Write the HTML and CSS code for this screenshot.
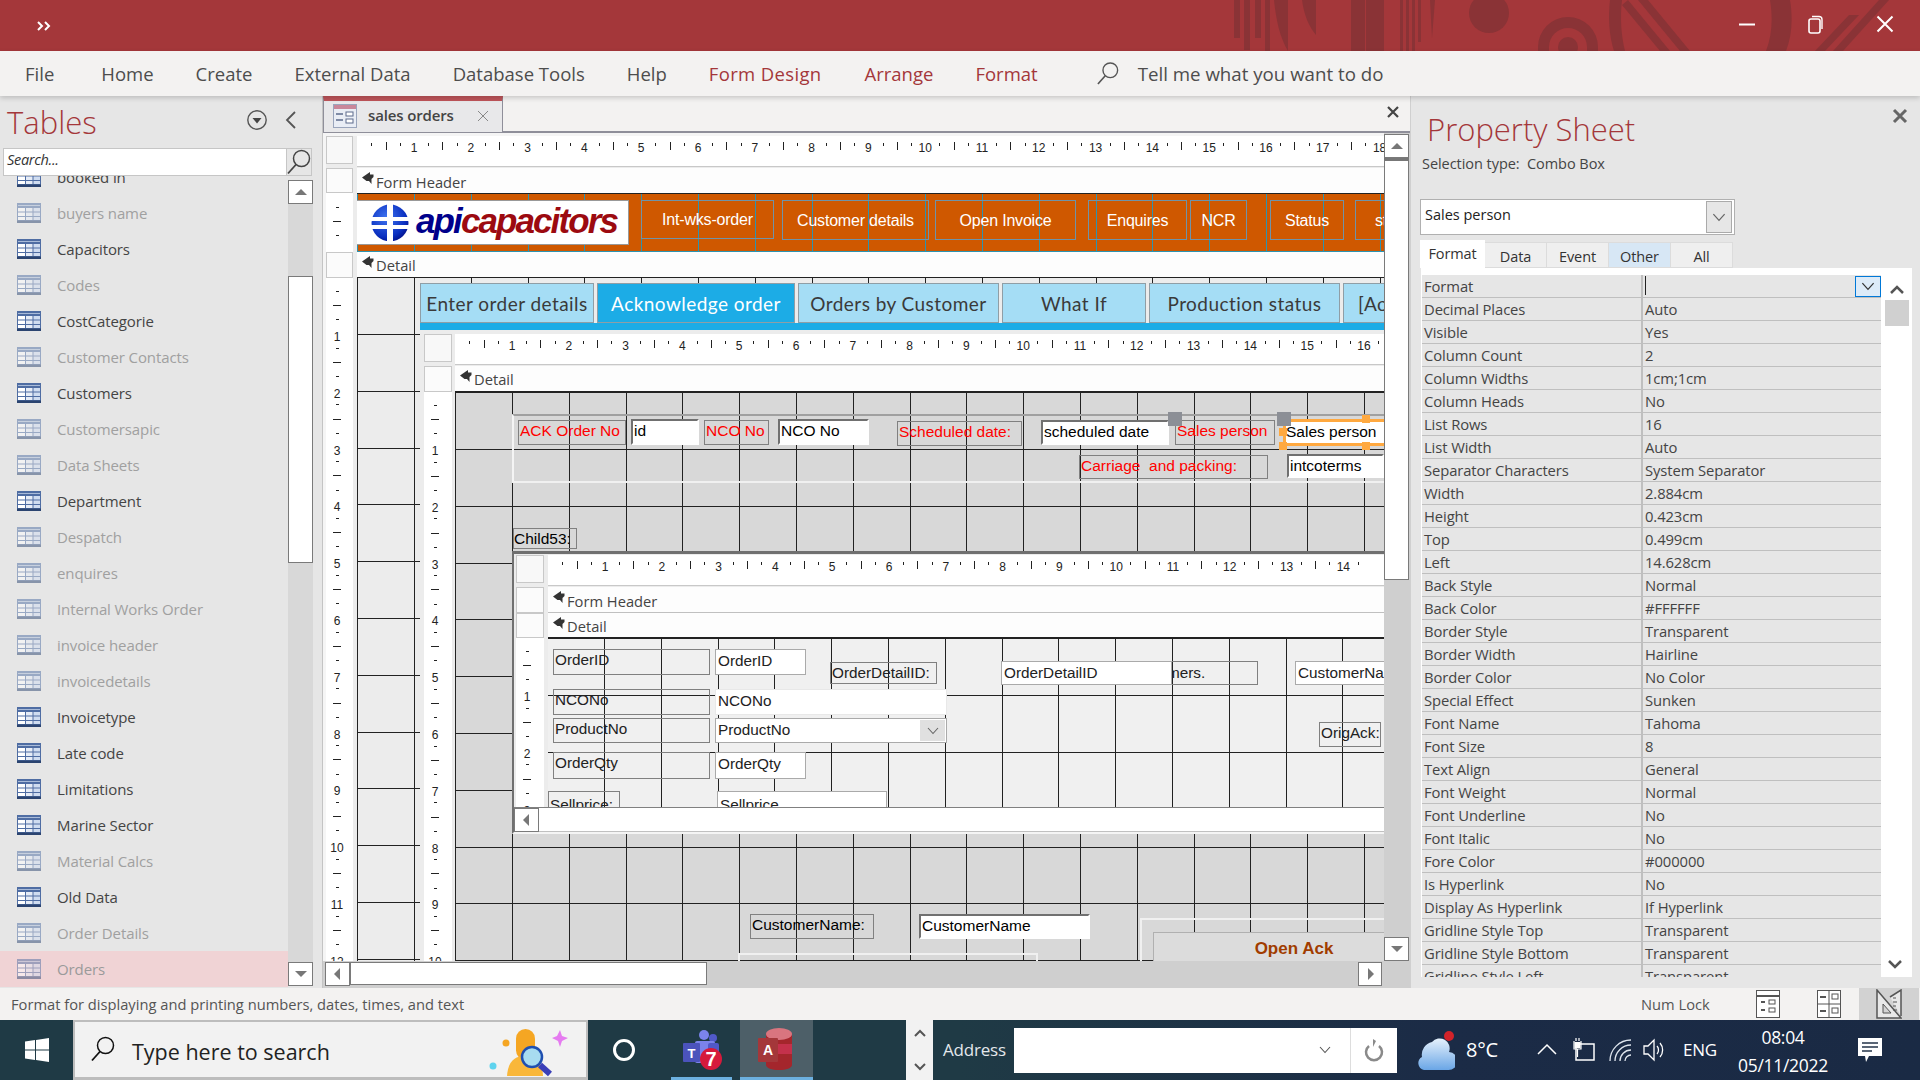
FILE: index.html
```html
<!DOCTYPE html>
<html lang="en">
<head>
<meta charset="utf-8">
<title>sales orders</title>
<link rel="stylesheet" href="styles.css">
</head>
<body>
<svg class="defs" width="0" height="0" aria-hidden="true">
  <symbol id="tbl" viewBox="0 0 24 20">
    <rect width="24" height="20" fill="#4f6da3"/>
    <rect y="17.5" width="24" height="2.5" fill="#2b4470"/>
    <rect x="1" y="2" width="22" height="1" fill="#a9bbd8"/>
    <rect x="1" y="5" width="7" height="3.5" fill="#fff"/><rect x="9" y="5" width="6.5" height="3.5" fill="#e6ecf6"/><rect x="16.500" y="5" width="6.500" height="3.500" fill="#cfdcf0"/>
    <rect x="1" y="9.500" width="7" height="3.500" fill="#fff"/><rect x="9" y="9.500" width="6.500" height="3.500" fill="#e6ecf6"/><rect x="16.500" y="9.500" width="6.500" height="3.500" fill="#cfdcf0"/>
    <rect x="1" y="14" width="7" height="3" fill="#fff"/><rect x="9" y="14" width="6.500" height="3" fill="#e6ecf6"/><rect x="16.500" y="14" width="6.500" height="3" fill="#cfdcf0"/>
  </symbol>
  <symbol id="mark" viewBox="0 0 12 12">
    <path d="M0 5.500L8 0V2.500H11.500V5L9.500 7V12L7 9H4.500z" fill="#333"/>
  </symbol>
  <symbol id="glass" viewBox="0 0 24 26">
    <circle cx="14.500" cy="9.500" r="8" fill="none" stroke="currentColor" stroke-width="1.500"/>
    <path d="M9 15.500L1 24.500" fill="none" stroke="currentColor" stroke-width="1.800"/>
  </symbol>
  <symbol id="chev" viewBox="0 0 12 8">
    <path d="M1 1l5 5.500L11 1" fill="none" stroke="currentColor" stroke-width="1.100"/>
  </symbol>
</svg>

<header class="titlebar">
  <svg class="title-art" width="760" height="51" viewBox="0 0 760 51" aria-hidden="true">
    <g fill="#8a3336">
      <rect x="74" width="6" height="38"/><rect x="84" width="6" height="50"/><rect x="95" width="6" height="38"/><rect x="105" width="5" height="51"/>
      <path d="M114 0H128V51C120 38 116 20 114 0z"/>
      <path d="M142 0h14v35c-7-8-12-20-14-35z"/>
      <rect x="191" width="14" height="51"/><rect x="206" width="18" height="51"/>
      <rect x="240" width="3" height="51"/><rect x="246" width="3" height="51"/><rect x="252" width="3" height="51"/><rect x="258" width="3" height="42"/>
      <path d="M270 0h5l-3 38z"/>
      <circle cx="329" cy="13" r="20"/>
      <path d="M378 51V47a30 30 0 0 1 60 0v4h-11v-4a19 19 0 0 0-38 0v4z"/>
      <circle cx="408" cy="47" r="10"/>
      <path d="M450 0h12c-2 18-1 35 3 51h-11c-5-16-6-34-4-51z"/>
      <path d="M462 5l6-5 42 51h-10z"/><path d="M478 0h10l42 51h-10z"/>
      <path d="M610 0h20c3 18 2 36-4 51h-20c6-15 7-33 4-51z"/>
      <path d="M655 51l34-36h10l-34 36z"/><path d="M673 51l46-51h10l-46 51z"/>
    </g>
  </svg>
  <svg class="qat" width="14" height="12" viewBox="0 0 14 12" aria-hidden="true"><path d="M1 2l4 4-4 4M8 2l4 4-4 4" fill="none" stroke="#fff" stroke-width="2"/></svg>
  <div class="winbtns">
    <svg width="18" height="18" viewBox="0 0 18 18" aria-hidden="true"><path d="M1 9.500H17" stroke="#fff" stroke-width="2"/></svg>
    <svg width="18" height="22" viewBox="0 0 18 22" aria-hidden="true"><rect x="2" y="6" width="11" height="14" rx="2" fill="none" stroke="#fff" stroke-width="1.600"/><path d="M5 3.500h7a3 3 0 0 1 3 3V16" fill="none" stroke="#fff" stroke-width="1.400"/></svg>
    <svg width="18" height="18" viewBox="0 0 18 18" aria-hidden="true"><path d="M1.500 1.500l15 15M16.500 1.500l-15 15" stroke="#fff" stroke-width="2"/></svg>
  </div>
</header>

<nav class="ribbon">
  <span class="r-file">File</span><span>Home</span><span>Create</span><span>External Data</span><span>Database Tools</span><span>Help</span>
  <span class="ctx r-form">Form Design</span><span class="ctx">Arrange</span><span class="ctx">Format</span>
  <span class="tell"><svg class="tell-ico" width="22" height="25"><use href="#glass"/></svg>Tell me what you want to do</span>
</nav>

<main class="main">
  <aside class="nav">
    <div class="nav-head">
      <h2>Tables</h2>
      <svg class="nav-btn" width="22" height="22" viewBox="0 0 22 22" aria-hidden="true"><circle cx="11" cy="11" r="9.200" fill="none" stroke="#555" stroke-width="1.400"/><path d="M6.500 9h9L11 14.500z" fill="#444"/></svg>
      <svg class="nav-btn2" width="12" height="20" viewBox="0 0 12 20" aria-hidden="true"><path d="M10 2L2 10l8 8" fill="none" stroke="#555" stroke-width="1.800"/></svg>
    </div>
    <div class="nav-search"><span class="nav-search-text">Search...</span><span class="nav-search-btn"><svg width="24" height="26"><use href="#glass"/></svg></span></div>
    <div class="nav-body">
      <ul class="nav-list">
        <li class="cut"><svg width="24" height="20"><use href="#tbl"/></svg>booked in</li>
        <li class="dim"><svg width="24" height="20"><use href="#tbl"/></svg>buyers name</li>
        <li><svg width="24" height="20"><use href="#tbl"/></svg>Capacitors</li>
        <li class="dim"><svg width="24" height="20"><use href="#tbl"/></svg>Codes</li>
        <li><svg width="24" height="20"><use href="#tbl"/></svg>CostCategorie</li>
        <li class="dim"><svg width="24" height="20"><use href="#tbl"/></svg>Customer Contacts</li>
        <li><svg width="24" height="20"><use href="#tbl"/></svg>Customers</li>
        <li class="dim"><svg width="24" height="20"><use href="#tbl"/></svg>Customersapic</li>
        <li class="dim"><svg width="24" height="20"><use href="#tbl"/></svg>Data Sheets</li>
        <li><svg width="24" height="20"><use href="#tbl"/></svg>Department</li>
        <li class="dim"><svg width="24" height="20"><use href="#tbl"/></svg>Despatch</li>
        <li class="dim"><svg width="24" height="20"><use href="#tbl"/></svg>enquires</li>
        <li class="dim"><svg width="24" height="20"><use href="#tbl"/></svg>Internal Works Order</li>
        <li class="dim"><svg width="24" height="20"><use href="#tbl"/></svg>invoice header</li>
        <li class="dim"><svg width="24" height="20"><use href="#tbl"/></svg>invoicedetails</li>
        <li><svg width="24" height="20"><use href="#tbl"/></svg>Invoicetype</li>
        <li><svg width="24" height="20"><use href="#tbl"/></svg>Late code</li>
        <li><svg width="24" height="20"><use href="#tbl"/></svg>Limitations</li>
        <li><svg width="24" height="20"><use href="#tbl"/></svg>Marine Sector</li>
        <li class="dim"><svg width="24" height="20"><use href="#tbl"/></svg>Material Calcs</li>
        <li><svg width="24" height="20"><use href="#tbl"/></svg>Old Data</li>
        <li class="dim"><svg width="24" height="20"><use href="#tbl"/></svg>Order Details</li>
        <li class="dim sel"><svg width="24" height="20"><use href="#tbl"/></svg>Orders</li>
      </ul>
      <div class="nav-scroll">
        <button class="sb-btn sb-up" aria-label="Scroll up"></button>
        <div class="nav-thumb"></div>
        <button class="sb-btn sb-down" aria-label="Scroll down"></button>
      </div>
    </div>
  </aside>

  <section class="doc">
    <div class="doc-tabs">
      <div class="doc-tab">
        <svg width="24" height="24" viewBox="0 0 24 24" aria-hidden="true"><rect width="24" height="24" fill="#e9edf5"/><rect width="24" height="5" fill="#c9879a"/><rect x=".5" y=".5" width="23" height="23" fill="none" stroke="#9aa5bc"/><path d="M3 10h7M3 16h7" stroke="#5c6b8c" stroke-width="1.500"/><rect x="13" y="8" width="7" height="4" fill="#fff" stroke="#5c6b8c"/><rect x="13" y="15" width="7" height="4" fill="#fff" stroke="#5c6b8c"/></svg>
        <b>sales orders</b>
        <svg class="doc-tab-x" width="12" height="12" viewBox="0 0 12 12" aria-hidden="true"><path d="M1 1l10 10M11 1L1 11" stroke="#888" stroke-width="1"/></svg>
      </div>
      <svg class="doc-x" width="14" height="14" viewBox="0 0 14 14" aria-hidden="true"><path d="M2 2l10 10M12 2L2 12" stroke="#444" stroke-width="2.200"/></svg>
    </div>

    <div class="doc-body">
      <div class="surface">
        <div class="fd fd-outer">
          <div class="corner"></div>
          <div class="hruler"><i class="cm first"></i><i class="cm">1</i><i class="cm">2</i><i class="cm">3</i><i class="cm">4</i><i class="cm">5</i><i class="cm">6</i><i class="cm">7</i><i class="cm">8</i><i class="cm">9</i><i class="cm">10</i><i class="cm">11</i><i class="cm">12</i><i class="cm">13</i><i class="cm">14</i><i class="cm">15</i><i class="cm">16</i><i class="cm">17</i><i class="cm">18</i></div>
          <div class="vruler">
            <div class="vband"></div>
            <div class="vpart vpart-hdr"><i class="cm first"></i><i class="cm"></i></div>
            <div class="vband vband-tall"></div>
            <div class="vpart"><i class="cm first"></i><i class="cm">1</i><i class="cm">2</i><i class="cm">3</i><i class="cm">4</i><i class="cm">5</i><i class="cm">6</i><i class="cm">7</i><i class="cm">8</i><i class="cm">9</i><i class="cm">10</i><i class="cm">11</i><i class="cm">12</i></div>
          </div>
          <div class="sections">
            <div class="band band-h"><svg class="mark" width="12" height="12"><use href="#mark"/></svg>Form Header</div>
            <div class="sec-orange">
              <div class="logo">
                <svg width="44" height="44" viewBox="0 0 44 44" aria-hidden="true">
                  <defs><radialGradient id="ball" cx=".4" cy=".35" r=".75"><stop offset="0" stop-color="#3f74f0"/><stop offset=".7" stop-color="#0a2fc0"/><stop offset="1" stop-color="#00087a"/></radialGradient></defs>
                  <circle cx="22" cy="22" r="18.500" fill="url(#ball)"/>
                  <path d="M19 3h6v13h16v4H25v4h16v4H25v13h-6V28H3v-4h16v-4H3v-4h16z" fill="#fff"/>
                </svg>
                <span class="logo-text"><b class="l1">api</b><b class="l2">capacitors</b></span>
              </div>
              <span class="obtn ob1">Int-wks-order</span>
              <span class="obtn ob2">Customer details</span>
              <span class="obtn ob3">Open Invoice</span>
              <span class="obtn ob4">Enquires</span>
              <span class="obtn ob5">NCR</span>
              <span class="obtn ob6">Status</span>
              <span class="obtn ob7">st</span>
            </div>
            <div class="band band-d"><svg class="mark" width="12" height="12"><use href="#mark"/></svg>Detail</div>
            <div class="sec-detail">
              <div class="tabctl">
                <div class="tabrow">
                  <span class="ftab ft1">Enter order details</span>
                  <span class="ftab ft2 on">Acknowledge order</span>
                  <span class="ftab ft3">Orders by Customer</span>
                  <span class="ftab ft4">What If</span>
                  <span class="ftab ft5">Production status</span>
                  <span class="ftab ft6">[Ac</span>
                </div>
                <div class="fd fd-inner">
                  <div class="corner"></div>
                  <div class="hruler"><i class="cm first"></i><i class="cm">1</i><i class="cm">2</i><i class="cm">3</i><i class="cm">4</i><i class="cm">5</i><i class="cm">6</i><i class="cm">7</i><i class="cm">8</i><i class="cm">9</i><i class="cm">10</i><i class="cm">11</i><i class="cm">12</i><i class="cm">13</i><i class="cm">14</i><i class="cm">15</i><i class="cm">16</i></div>
                  <div class="vruler">
                    <div class="vband vband-tall"></div>
                    <div class="vpart"><i class="cm first"></i><i class="cm">1</i><i class="cm">2</i><i class="cm">3</i><i class="cm">4</i><i class="cm">5</i><i class="cm">6</i><i class="cm">7</i><i class="cm">8</i><i class="cm">9</i><i class="cm">10</i></div>
                  </div>
                  <div class="sections">
                    <div class="band band-d"><svg class="mark" width="12" height="12"><use href="#mark"/></svg>Detail</div>
                    <div class="sec-inner">
                      <div class="gbox"></div>
                      <div class="ctl lbl red c-ack">ACK Order No</div>
                      <div class="ctl tbx c-id">id</div>
                      <div class="ctl lbl red c-ncol">NCO No</div>
                      <div class="ctl tbx c-ncob">NCO No</div>
                      <div class="ctl lbl red c-schl">Scheduled date:</div>
                      <div class="ctl tbx c-schb">scheduled date</div>
                      <div class="ctl lbl red c-sall">Sales person</div>
                      <div class="ctl combo-sel c-salb">Sales person</div>
                      <i class="h-gray hg1"></i><i class="h-gray hg2"></i>
                      <i class="h-or ho1"></i><i class="h-or ho2"></i><i class="h-or ho3"></i><i class="h-or ho4"></i>
                      <div class="ctl lbl red c-carl">Carriage&nbsp; and packing:</div>
                      <div class="ctl tbx c-inco">intcoterms</div>
                      <div class="ctl lbl c-child">Child53:</div>

                      <div class="subframe">
                        <div class="fd fd-sub">
                          <div class="corner"></div>
                          <div class="hruler"><i class="cm first"></i><i class="cm">1</i><i class="cm">2</i><i class="cm">3</i><i class="cm">4</i><i class="cm">5</i><i class="cm">6</i><i class="cm">7</i><i class="cm">8</i><i class="cm">9</i><i class="cm">10</i><i class="cm">11</i><i class="cm">12</i><i class="cm">13</i><i class="cm">14</i></div>
                          <div class="vruler">
                            <div class="vband vband-a"></div>
                            <div class="vband vband-b"></div>
                            <div class="vpart"><i class="cm first"></i><i class="cm">1</i><i class="cm">2</i><i class="cm">3</i></div>
                          </div>
                          <div class="sections">
                            <div class="band band-a"><svg class="mark" width="12" height="12"><use href="#mark"/></svg>Form Header</div>
                            <div class="band band-b"><svg class="mark" width="12" height="12"><use href="#mark"/></svg>Detail</div>
                            <div class="sec-sub">
                              <div class="ctl sl s-oidl">OrderID</div>
                              <div class="ctl sb s-oidb">OrderID</div>
                              <div class="ctl sl s-odl">OrderDetailID:</div>
                              <div class="ctl sl s-cl">Customers.</div>
                              <div class="ctl sb s-odb">OrderDetailID</div>
                              <div class="ctl sb s-cnb">CustomerName</div>
                              <div class="ctl sl s-ncl">NCONo</div>
                              <div class="ctl sb s-ncb">NCONo</div>
                              <div class="ctl sl s-pl">ProductNo</div>
                              <div class="ctl sb s-pb">ProductNo<span class="combo-btn"><svg width="12" height="8"><use href="#chev"/></svg></span></div>
                              <div class="ctl sl s-ql">OrderQty</div>
                              <div class="ctl sb s-qb">OrderQty</div>
                              <div class="ctl sl s-spl">Sellprice:</div>
                              <div class="ctl sb s-spb">Sellprice</div>
                              <div class="ctl sl s-oa">OrigAck:</div>
                            </div>
                          </div>
                        </div>
                        <div class="sub-h"><button class="sb-btn sb-left" aria-label="Scroll left"></button></div>
                      </div>

                      <div class="ctl lbl c-cnl">CustomerName:</div>
                      <div class="ctl tbx c-cnb">CustomerName</div>
                      <div class="gbox2"></div>
                      <div class="gbox3"></div>
                      <div class="c-open">Open Ack</div>
                    </div>
                  </div>
                </div>
              </div>
            </div>
          </div>
        </div>
      </div>
      <div class="v-scroll">
        <button class="sb-btn sb-up" aria-label="Scroll up"></button>
        <div class="v-thumb"></div>
        <button class="sb-btn sb-down" aria-label="Scroll down"></button>
      </div>
      <div class="h-scroll">
        <button class="sb-btn sb-left" aria-label="Scroll left"></button>
        <div class="h-thumb"></div>
        <button class="sb-btn sb-right" aria-label="Scroll right"></button>
      </div>
    </div>
  </section>

  <aside class="props">
    <svg class="props-x" width="16" height="16" viewBox="0 0 16 16" aria-hidden="true"><path d="M2 2l12 12M14 2L2 14" stroke="#666" stroke-width="3"/></svg>
    <h2>Property Sheet</h2>
    <p class="seltype">Selection type:&nbsp; Combo Box</p>
    <div class="pcombo"><span>Sales person</span><i class="pcombo-btn"><svg width="14" height="9"><use href="#chev"/></svg></i></div>
    <div class="ptabs"><span class="on">Format</span><span>Data</span><span>Event</span><span class="hov">Other</span><span>All</span></div>
    <div class="ppanel">
      <div class="ptable">
        <div class="prow first"><span>Format</span><span><i class="caret"></i><i class="pdrop"><svg width="14" height="9"><use href="#chev"/></svg></i></span></div>
        <div class="prow"><span>Decimal Places</span><span>Auto</span></div>
        <div class="prow"><span>Visible</span><span>Yes</span></div>
        <div class="prow"><span>Column Count</span><span>2</span></div>
        <div class="prow"><span>Column Widths</span><span>1cm;1cm</span></div>
        <div class="prow"><span>Column Heads</span><span>No</span></div>
        <div class="prow"><span>List Rows</span><span>16</span></div>
        <div class="prow"><span>List Width</span><span>Auto</span></div>
        <div class="prow"><span>Separator Characters</span><span>System Separator</span></div>
        <div class="prow"><span>Width</span><span>2.884cm</span></div>
        <div class="prow"><span>Height</span><span>0.423cm</span></div>
        <div class="prow"><span>Top</span><span>0.499cm</span></div>
        <div class="prow"><span>Left</span><span>14.628cm</span></div>
        <div class="prow"><span>Back Style</span><span>Normal</span></div>
        <div class="prow"><span>Back Color</span><span>#FFFFFF</span></div>
        <div class="prow"><span>Border Style</span><span>Transparent</span></div>
        <div class="prow"><span>Border Width</span><span>Hairline</span></div>
        <div class="prow"><span>Border Color</span><span>No Color</span></div>
        <div class="prow"><span>Special Effect</span><span>Sunken</span></div>
        <div class="prow"><span>Font Name</span><span>Tahoma</span></div>
        <div class="prow"><span>Font Size</span><span>8</span></div>
        <div class="prow"><span>Text Align</span><span>General</span></div>
        <div class="prow"><span>Font Weight</span><span>Normal</span></div>
        <div class="prow"><span>Font Underline</span><span>No</span></div>
        <div class="prow"><span>Font Italic</span><span>No</span></div>
        <div class="prow"><span>Fore Color</span><span>#000000</span></div>
        <div class="prow"><span>Is Hyperlink</span><span>No</span></div>
        <div class="prow"><span>Display As Hyperlink</span><span>If Hyperlink</span></div>
        <div class="prow"><span>Gridline Style Top</span><span>Transparent</span></div>
        <div class="prow"><span>Gridline Style Bottom</span><span>Transparent</span></div>
        <div class="prow"><span>Gridline Style Left</span><span>Transparent</span></div>
      </div>
      <div class="pscroll">
        <svg width="16" height="11" viewBox="0 0 16 11" aria-hidden="true"><path d="M2 9l6-6 6 6" fill="none" stroke="#555" stroke-width="2.500"/></svg>
        <div class="pthumb"></div>
        <svg class="pdown" width="16" height="11" viewBox="0 0 16 11" aria-hidden="true"><path d="M2 2l6 6 6-6" fill="none" stroke="#555" stroke-width="2.500"/></svg>
      </div>
    </div>
  </aside>
</main>

<footer class="status">
  <span class="status-text">Format for displaying and printing numbers, dates, times, and text</span>
  <span class="numlock">Num Lock</span>
  <span class="view-btn vb1"><svg width="24" height="28" viewBox="0 0 24 28" aria-hidden="true"><rect x=".5" y=".5" width="23" height="27" fill="#fff" stroke="#555"/><path d="M1 6h22" stroke="#555" stroke-width="2"/><path d="M5 12h4M5 20h4" stroke="#555" stroke-width="2"/><rect x="13" y="10" width="6" height="4" fill="none" stroke="#555"/><rect x="13" y="18" width="6" height="4" fill="none" stroke="#555"/></svg></span>
  <span class="view-btn vb2"><svg width="24" height="28" viewBox="0 0 24 28" aria-hidden="true"><rect x=".5" y=".5" width="23" height="27" fill="#fff" stroke="#555"/><path d="M12 0v28M0 14h24" stroke="#555"/><path d="M3 7h6" stroke="#555" stroke-width="2"/><rect x="15" y="4" width="6" height="5" fill="none" stroke="#555"/><path d="M3 21h6" stroke="#555" stroke-width="2"/><rect x="15" y="18" width="6" height="5" fill="none" stroke="#555"/></svg></span>
  <span class="view-btn active"><svg width="26" height="30" viewBox="0 0 26 30" aria-hidden="true"><path d="M1 1v28h24z" fill="#e8e8e8" stroke="#555" stroke-width="1.500"/><path d="M7 15v9h8z" fill="#d2d2d2" stroke="#555"/><path d="M14 8L25 1v26" fill="#e8e8e8" stroke="#555" stroke-width="1.500"/><path d="M17 9h3M17 13h4M17 17h3M17 21h4" stroke="#555"/></svg></span>
</footer>

<footer class="taskbar">
  <div class="tb-start"><svg width="24" height="24" viewBox="0 0 24 24" aria-hidden="true"><path d="M0 3.500l10-1.400v9.400H0zM11 1.900L24 0v11.500H11zM0 12.500h10v9.400L0 20.500zM11 12.500h13V24l-13-1.900z" fill="#fff"/></svg></div>
  <div class="tb-search">
    <svg class="tb-glass" width="24" height="26"><use href="#glass"/></svg>
    <span>Type here to search</span>
    <svg class="tb-fig" width="90" height="56" viewBox="0 0 90 56" aria-hidden="true">
      <circle cx="6" cy="44" r="3.500" fill="#5fd3ee"/><circle cx="19" cy="21" r="3.500" fill="#f5a623"/>
      <path d="M70 14l3-6 2 6 6 2-6 3-2 6-2-6-6-3z" fill="#e57bf0"/>
      <rect x="29" y="7" width="19" height="31" rx="9.500" fill="#f5a623"/>
      <path d="M20 54c1-15 8-20 18-20s18 6 18 20z" fill="#f9b73a"/>
      <circle cx="45" cy="35" r="10" fill="#a8dcf0" stroke="#1f4fb0" stroke-width="2.500"/>
      <path d="M53 43l10 9" stroke="#3a3fb8" stroke-width="6"/>
    </svg>
  </div>
  <div class="tb-cortana"><i></i></div>
  <div class="tb-app tb-teams">
    <svg width="40" height="42" viewBox="0 0 40 42" aria-hidden="true"><circle cx="21" cy="6" r="5" fill="#7b83eb"/><circle cx="30" cy="9" r="4" fill="#5059c9"/><rect x="12" y="12" width="20" height="22" rx="2" fill="#7b83eb"/><rect x="25" y="14" width="11" height="17" rx="2" fill="#5059c9"/><rect x="0" y="14" width="17" height="19" rx="1" fill="#4b53bc"/><text x="8.500" y="28.500" class="t-t">T</text><circle cx="28" cy="30" r="11" fill="#d61a3c"/><text x="28" y="37" class="t-7">7</text></svg>
  </div>
  <div class="tb-app tb-access">
    <svg width="38" height="44" viewBox="0 0 38 44" aria-hidden="true"><path d="M8 6v32c0 3 6 5 13 5s13-2 13-5V6z" fill="#a4262c"/><path d="M8 17h26v10H8z" fill="#c4314b"/><ellipse cx="21" cy="7" rx="13" ry="6" fill="#d9757f"/><rect x="0" y="11" width="20" height="24" rx="1" fill="#a4373a"/><text x="10" y="28" class="t-a">A</text></svg>
  </div>
  <div class="tb-arrows"><svg width="14" height="44" viewBox="0 0 14 44" aria-hidden="true"><path d="M2 8l5-5 5 5M2 36l5 5 5-5" fill="none" stroke="#555" stroke-width="2"/></svg></div>
  <span class="tb-addr-l">Address</span>
  <div class="tb-addr"><i></i><svg class="tb-ch" width="12" height="8"><use href="#chev"/></svg><svg class="tb-ref" width="20" height="26" viewBox="0 0 20 26" aria-hidden="true"><path d="M5 8a8 8 0 1 0 10 0" fill="none" stroke="#8a8a8a" stroke-width="2.500"/><path d="M9 1v8l3-6z" fill="#8a8a8a"/></svg></div>
  <svg class="tb-cloud" width="38" height="44" viewBox="0 0 38 44" aria-hidden="true"><defs><linearGradient id="cl" x1="0" y1="0" x2="0" y2="1"><stop offset="0" stop-color="#e6f1fc"/><stop offset="1" stop-color="#6aa6e6"/></linearGradient></defs><path d="M7 42a7 7 0 0 1-2-13 13 13 0 0 1 10-15 10 10 0 0 1 17 10 9 9 0 0 1-1 18z" fill="url(#cl)"/><circle cx="32" cy="8" r="5" fill="#d2232a"/></svg>
  <span class="tb-temp">8°C</span>
  <svg class="tb-ic tb-up" width="20" height="12" viewBox="0 0 20 12" aria-hidden="true"><path d="M1 11l9-9 9 9" fill="none" stroke="#fff" stroke-width="1.500"/></svg>
  <svg class="tb-ic tb-plug" width="24" height="24" viewBox="0 0 24 24" aria-hidden="true"><rect x="4" y="6" width="18" height="16" fill="none" stroke="#fff" stroke-width="1.500"/><path d="M2 3v8h7V3M4 0v3M7 0v3M5.500 11v8" fill="none" stroke="#fff" stroke-width="1.200"/><rect x="2.500" y="4" width="6" height="6" fill="#fff"/></svg>
  <svg class="tb-ic tb-wifi" width="24" height="24" viewBox="0 0 24 24" aria-hidden="true"><path d="M2 23A21 21 0 0 1 23 2M7 23A16 16 0 0 1 23 7M12 23A11 11 0 0 1 23 12M17 23a6 6 0 0 1 6-6" fill="none" stroke="#dfe6ee" stroke-width="1.300"/></svg>
  <svg class="tb-ic tb-vol" width="24" height="24" viewBox="0 0 24 24" aria-hidden="true"><path d="M2 8v8h4l6 6V2L6 8zM15 8c2 2 2 6 0 8M18 5c3.500 4 3.500 10 0 14" fill="none" stroke="#fff" stroke-width="1.300"/></svg>
  <span class="tb-eng">ENG</span>
  <div class="tb-clock"><span>08:04</span><span>05/11/2022</span></div>
  <svg class="tb-note" width="26" height="26" viewBox="0 0 26 26" aria-hidden="true"><path d="M1 1h24v18H12l-3 6-1-6H1z" fill="#fff"/><path d="M5 6h16M5 10h16M5 14h10" stroke="#24344a" stroke-width="1.500"/></svg>
</footer>
</body>
</html>
```

FILE: styles.css
```css
*{box-sizing:border-box}
html,body{margin:0;padding:0}
body{width:1920px;height:1080px;overflow:hidden;display:flex;flex-direction:column;font-family:"Open Sans","Noto Sans",sans-serif;color:#444;background:#e6e6e6}
.defs{position:absolute}
i{font-style:normal}
button{padding:0;margin:0;font:inherit}

/* title */
.titlebar{height:51px;background:#a4373a;position:relative;flex:none;overflow:hidden}
.title-art{position:absolute;left:1160px;top:0}
.qat{position:absolute;left:37px;top:20px}
.winbtns{position:absolute;left:1738px;top:13px;display:flex;gap:51px;align-items:center}

/* ribbon */
.ribbon{height:45px;background:#f3f2f1;flex:none;display:flex;align-items:center;gap:42px;padding:0 0 1px 25px;font-size:18.500px;color:#4d4d4d;position:relative;z-index:2;box-shadow:0 2px 5px rgba(0,0,0,.18)}
.ribbon .ctx{color:#a4373a}
.r-file{margin-right:5px}
.r-form{letter-spacing:.35px;margin-right:1px}
.tell{display:flex;align-items:center;margin-left:17px;gap:19px;font-size:18.700px}
.tell-ico{color:#555}

/* main */
.main{flex:1;display:flex;min-height:0}
.nav{width:322px;background:#e6e6e6;display:flex;flex-direction:column;flex:none}
.nav-head{height:52px;display:flex;align-items:center;position:relative}
.nav-head h2{margin:0 0 0 7px;font-weight:300;font-size:31px;color:#a4373a;line-height:52px}
.nav-btn{position:absolute;left:246px;top:13px}
.nav-btn2{position:absolute;left:285px;top:14px}
.nav-search{margin-left:3px;width:309px;height:28px;background:#fff;border:1px solid #c6c6c6;display:flex;flex:none}
.nav-search-text{flex:1;font-style:italic;font-size:14.500px;padding:1px 0 0 3px;color:#333;letter-spacing:-.3px}
.nav-search-btn{width:25px;background:#e6e6e6;border-left:1px solid #c6c6c6;color:#444}
.nav-body{flex:1;min-height:0;display:flex;position:relative;padding-right:9px}
.nav-list{flex:1;margin:0;padding:0;list-style:none;overflow:hidden;width:289px}
.nav-list li{height:36px;display:flex;align-items:center;gap:16px;padding-left:17px;font-size:15px;letter-spacing:-.1px;color:#444}
.nav-list li.cut{margin-top:-17px}
.nav-list li.dim{color:#a0a0a0}
.nav-list li.dim svg{opacity:.5}
.nav-list li.sel{background:#f0d3d5;height:36px;color:#9a9a9a}
.nav-scroll{width:25px;flex:none;background:#d8d8d8;display:flex;flex-direction:column;margin-top:4px;margin-bottom:2px}
.nav-thumb{height:287px;margin-top:72px;background:#fff;border:1px solid #7a7a7a}
.sb-btn{display:block;background:#fff;border:1px solid #7a7a7a;position:relative;flex:none;width:25px;height:24px}
.sb-down{margin-top:auto}
.sb-btn::after{content:"";position:absolute;left:50%;top:50%;width:0;height:0}
.sb-up::after{margin:-3px 0 0 -6px;border:solid transparent;border-width:0 6px 6px;border-bottom-color:#777}
.sb-down::after{margin:-3px 0 0 -6px;border:solid transparent;border-width:6px 6px 0;border-top-color:#777}
.sb-left::after{margin:-6px 0 0 -4px;border:solid transparent;border-width:6px 6px 6px 0;border-right-color:#777}
.sb-right::after{margin:-6px 0 0 -2px;border:solid transparent;border-width:6px 0 6px 6px;border-left-color:#777}

/* document */
.doc{width:1088px;flex:none;display:flex;flex-direction:column;background:#f3f2f1;border-left:1px solid #c4c4c4}
.doc-tabs{height:37px;flex:none;background:#f3f2f1;display:flex;border-bottom:2px solid #8f8f9a;position:relative}
.doc-tab{width:180px;height:36px;background:#e8e8ea;border-top:5px solid #bf555a;display:flex;align-items:center;padding:0 0 2px 9px;gap:11px;font-size:15px;color:#444;border-left:1px solid #8f8f9a;border-right:1px solid #8f8f9a;position:relative;letter-spacing:-.15px}
.doc-tab b{font-weight:600;margin-top:-2px}
.doc-tab-x{margin-left:12px}
.doc-x{position:absolute;right:10px;top:9px}
.doc-body{flex:1;min-height:0;display:grid;grid-template-columns:1fr 26px;grid-template-rows:1fr 27px;background:#cfcfcf}
.surface{overflow:hidden;padding:3px 0 0 3px;background:#f5f5f5;min-height:0;min-width:0}
.v-scroll{display:flex;flex-direction:column;background:#cfcfcf;padding-right:1px;padding-top:1px}
.v-scroll .sb-btn{width:25px}
.v-thumb{height:422px;background:#fff;border:1px solid #7a7a7a;border-top:3px solid #777;width:25px}
.h-scroll{grid-column:1/3;display:flex;padding:1px 28px 3px 2px;background:#cfcfcf}
.h-scroll .sb-left{width:25px;height:24px}
.h-thumb{width:357px;background:#fff;border:1px solid #7a7a7a}
.h-scroll .sb-right{margin-left:auto;width:24px;height:24px}

/* form designer scaffolding */
.fd{display:grid;grid-template-columns:27px 1fr;grid-template-rows:31px 1fr;column-gap:4px;row-gap:1px;min-height:0;height:100%;background:#ececec}
.corner{background:#f8f8f8;border:1px solid #c8c8c8;height:28px;align-self:start}
.hruler{display:flex;overflow:hidden;background:#fff;border-bottom:1px solid #c8c8c8;height:31px}
.cm{font-family:"Liberation Sans",sans-serif;font-size:12px;color:#222;background-repeat:no-repeat;background-image:linear-gradient(#222,#222),linear-gradient(#222,#222),linear-gradient(#222,#222)}
.hruler .cm{flex:0 0 56.800px;text-align:center;line-height:25px;background-size:1px 8px,1px 3px,1px 3px;background-position:0 6px,14.200px 7px,42.600px 7px}
.hruler .cm.first{margin-left:-28.200px}
.vruler{background:#fff;overflow:hidden;min-height:0}
.vband{height:25px;border:1px solid #c8c8c8;background:#fbfbfb}
.vband-tall{height:26px}
.vpart{overflow:hidden}
.vpart-hdr{height:59px}
.vpart .cm{display:block;width:22px;height:56.800px;text-align:center;line-height:64px;background-size:8px 1px,3px 1px,3px 1px;background-position:center 0,center 14.200px,center 42.600px}
.vpart .cm.first{margin-top:-29.800px}
.vpart-hdr .cm.first{margin-top:-28.800px}
.sections{display:flex;flex-direction:column;overflow:hidden;min-height:0;background:#ececec}
.band{height:26px;background:#fdfdfd;flex:none;font-size:14.700px;color:#444;padding:3px 0 0 19px;line-height:24px;border-bottom:1px solid #222;position:relative}
.mark{position:absolute;left:5px;top:4px}
.band-h{padding-top:2px}
.band-d{padding-top:1px}

/* orange header */
.sec-orange{height:58px;flex:none;position:relative;background-color:#cf5800;background-image:repeating-linear-gradient(90deg,transparent 0 55.800px,#2c93b0 55.800px 56.800px);background-size:3000px 100%;background-position:-55.600px 0;border-bottom:1px solid #2c93b0}
.logo{position:absolute;left:0;top:6px;width:272px;height:45px;background:#fff;border:1px solid #999;border-left:0;display:flex;align-items:center;padding-left:11px;z-index:1}
.logo-text{font-family:"Liberation Sans",sans-serif;font-size:35px;font-style:italic;letter-spacing:-1.900px;margin-left:4px;line-height:38px;padding-bottom:4px}
.l1{color:#00008b}
.l2{color:#9c0a10}
.obtn{position:absolute;top:6px;height:40px;border:1px solid #6f93a8;color:#fff;font-family:"Liberation Sans",sans-serif;font-size:16px;display:flex;align-items:center;justify-content:center;letter-spacing:-.2px;padding-top:2px}
.ob1{left:284px;width:133px;height:39px;padding-top:0}
.ob2{left:425px;width:147px}
.ob3{left:578px;width:141px}
.ob4{left:731px;width:99px}
.ob5{left:833px;width:57px}
.ob6{left:913px;width:74px}
.ob7{left:998px;width:60px;justify-content:flex-start;padding-left:19px}

/* detail of outer form */
.sec-detail{flex:1;min-height:0;position:relative;overflow:hidden;background-color:#ececec;background-image:repeating-linear-gradient(90deg,transparent 0 55.800px,#222 55.800px 56.800px),repeating-linear-gradient(180deg,transparent 0 55.800px,#222 55.800px 56.800px);background-size:3000px 3000px;background-position:-55.600px 0,0 -56.600px}
.tabctl{position:absolute;left:63px;top:5px;right:0;bottom:0;display:flex;flex-direction:column;overflow:hidden;background:#ececec}
.tabrow{height:47px;flex:none;display:flex;gap:3px;border-bottom:7px solid #1cace6;align-items:stretch}
.ftab{background:#a5ddf5;border:1px solid #8f9ea6;font-family:Lato,"Open Sans",sans-serif;font-size:19px;letter-spacing:.45px;color:#3a3a3a;display:flex;align-items:center;justify-content:center;flex:none;white-space:nowrap;height:40px}
.ftab.on{background:#1cace6;color:#fff}
.ft1{width:174px}.ft2{width:198px}.ft3{width:201px}.ft4{width:144px}.ft5{width:191px}
.ft6{width:120px;justify-content:flex-start;padding-left:14px}
.fd-inner{grid-template-columns:28px 1fr;column-gap:3px;margin:4px 0 0 4px;flex:1;height:auto;background:#ececec}

/* inner form canvas */
.sec-inner{flex:1;min-height:0;position:relative;overflow:hidden;background-color:#d8d8d8;background-image:repeating-linear-gradient(90deg,transparent 0 55.800px,#222 55.800px 56.800px),repeating-linear-gradient(180deg,transparent 0 55.800px,#222 55.800px 56.800px);background-size:3000px 3000px;background-position:-55.600px 0,0 -55.600px}
.ctl{position:absolute;font-family:"Liberation Sans",sans-serif;font-size:15.500px;white-space:nowrap;overflow:hidden;color:#000}
.lbl{border:1px solid #808080;padding:0 0 0 1px;line-height:19px}
.red{color:#f00}
.tbx{background:#fff;border:2px solid;border-color:#707070 #fff #fff #707070;padding:0 0 0 1px;line-height:20px}
.gbox{position:absolute;left:57px;top:22px;right:0;height:69px;border-top:2px solid #a0a0a0;border-left:2px solid #f4f4f4;border-bottom:2px solid #f0f0f0}
.c-ack{left:63px;top:28px;width:108px;height:25px}
.c-id{left:176px;top:27px;width:68px;height:26px}
.c-ncol{left:249px;top:28px;width:65px;height:25px}
.c-ncob{left:323px;top:27px;width:91px;height:26px}
.c-schl{left:442px;top:29px;width:125px;height:25px}
.c-schb{left:586px;top:28px;width:128px;height:25px}
.c-sall{left:720px;top:28px;width:100px;height:25px}
.c-salb{left:828px;top:27px;right:0;height:27px}
.combo-sel{background:#fff;border:3px solid #ffa940;border-right:0;padding:0;line-height:20px}
.h-gray{position:absolute;width:14px;height:14px;background:#8c8f96;top:20px;z-index:2}
.hg1{left:713px}.hg2{left:822px}
.h-or{position:absolute;width:8px;height:8px;background:#ffa940;z-index:2}
.ho1{left:824px;top:36px}.ho2{left:824px;top:50px}.ho3{left:907px;top:23px}.ho4{left:907px;top:50px}
.c-carl{left:624px;top:63px;width:189px;height:24px}
.c-inco{left:832px;top:62px;right:0;height:24px}
.c-child{left:58px;top:136px;width:64px;height:21px;padding:0}
.subframe{position:absolute;left:57px;top:159px;right:0;height:283px;border-top:3px solid #707070;border-left:2px solid #707070;border-bottom:2px solid #f4f4f4;display:flex;flex-direction:column;background:#ececec;z-index:1}
.fd-sub{grid-template-columns:28px 1fr;column-gap:4px;padding:1px 0 0 2px;flex:1;height:auto;grid-template-rows:31px 1fr}
.sub-h{height:25px;flex:none;background:#fff;border-top:1px solid #808080;border-bottom:1px solid #c0c0c0}
.band-a{height:26px;border-bottom:1px solid #c0c0c0;padding-top:2px}
.band-b{height:25px;padding-top:1px}
.vband-a{height:26px}
.vband-b{height:25px}
.sec-sub{flex:1;min-height:0;position:relative;overflow:hidden;background-color:#f0f0f0;background-image:repeating-linear-gradient(90deg,transparent 0 55.800px,#222 55.800px 56.800px),repeating-linear-gradient(180deg,transparent 0 55.800px,#222 55.800px 56.800px);background-size:3000px 3000px;background-position:-56.600px 0,0 -55.600px}
.sl,.sb{font-size:15.300px;color:#222;padding:0 0 0 1px;line-height:19px}
.sl{border:1px solid #808080}
.sb{background:#fff;border:1px solid #aaa;padding-left:2px;padding-top:1px}
.s-oidl{left:5px;top:11px;width:157px;height:26px}
.s-oidb{left:167px;top:11px;width:91px;height:26px}
.s-odl{left:282px;top:24px;width:107px;height:22px}
.s-cl{left:577px;top:23px;width:133px;height:24px;padding-top:1px}
.s-odb{left:453px;top:23px;width:171px;height:24px}
.s-cnb{left:747px;top:23px;width:130px;height:24px}
.s-ncl{left:5px;top:51px;width:157px;height:26px}
.s-ncb{left:167px;top:51px;width:232px;height:26px;border-color:#e8e8e8}
.s-pl{left:5px;top:80px;width:157px;height:25px}
.s-pb{left:167px;top:80px;width:232px;height:25px}
.combo-btn{position:absolute;right:1px;top:1px;bottom:1px;width:25px;background:#e0e0e0;color:#666;display:flex;align-items:center;justify-content:center}
.s-ql{left:5px;top:114px;width:157px;height:27px}
.s-qb{left:167px;top:114px;width:91px;height:27px}
.s-spl{left:0;top:153px;width:72px;height:24px;padding-top:3px}
.s-spb{left:169px;top:153px;width:170px;height:24px;padding-top:3px}
.s-oa{left:771px;top:84px;width:62px;height:25px}
.c-cnl{left:295px;top:522px;width:124px;height:25px}
.c-cnb{left:464px;top:522px;width:171px;height:25px}
.gbox2{position:absolute;left:685px;top:526px;width:300px;height:100px;border-top:2px solid #f0f0f0;border-left:2px solid #f0f0f0}
.gbox3{position:absolute;left:283px;top:561px;width:300px;height:20px;border:2px solid #f0f0f0}
.c-open{position:absolute;left:698px;top:540px;width:282px;height:34px;background:#dcdcdc;border:1px solid #b0b0b0;color:#a13c00;font-family:"Liberation Sans",sans-serif;font-weight:700;font-size:17px;display:flex;align-items:center;justify-content:center}

/* property sheet */
.props{flex:1;background:#e6e6e6;position:relative;display:flex;flex-direction:column;border-left:1px solid #d0d0d0;padding-left:9px}
.props h2{margin:16px 0 0 7px;font-weight:300;font-size:31px;line-height:34px;color:#a4373a}
.props-x{position:absolute;right:12px;top:12px}
.seltype{margin:8px 0 0 2px;font-size:14.500px;line-height:20px;letter-spacing:-.05px;color:#444}
.pcombo{margin-top:25px;width:315px;height:36px;background:#fff;border:1px solid #b0b0b0;display:flex;align-items:center;font-size:14.500px;color:#222;padding-left:4px;justify-content:space-between}
.pcombo span{padding-bottom:5px}
.pcombo-btn{width:26px;height:32px;background:#e6e6e6;border:1px solid #aaa;display:flex;align-items:center;justify-content:center;color:#666;margin-right:2px}
.ptabs{margin-top:5px;height:28px;display:flex;font-size:14.500px;color:#333;align-items:flex-end;letter-spacing:-.1px}
.ptabs span{height:26px;border:1px solid #dcdcdc;border-left:0;background:#efefef;display:flex;align-items:center;justify-content:center;width:62px;padding-top:2px}
.ptabs .on{background:#fff;height:28px;width:65px;border:0;padding:0 0 1px}
.ptabs .hov{background:#d7e7f5}
.ppanel{width:491px;height:709px;background:#fff;padding:7px 0 0 1px;display:flex;margin-left:1px;overflow:hidden}
.ptable{width:459px;height:702px;overflow:hidden;font-size:14.800px;letter-spacing:-.1px;color:#444;flex:none}
.prow{display:grid;grid-template-columns:219px 238px;column-gap:2px;height:23px;background:#bfbfbf;padding-bottom:2px;width:459px}
.prow span{background:#e6e6e6;line-height:21px;padding:1px 0 0 2px;white-space:nowrap;position:relative;overflow:visible}
.caret{position:absolute;left:2px;top:1px;width:1px;height:19px;background:#222}
.pdrop{position:absolute;right:0;top:1px;width:26px;height:21px;background:#ddebf8;border:1px solid #0078d7;display:flex;align-items:center;justify-content:center;color:#333}
.pscroll{flex:1;display:flex;flex-direction:column;align-items:center;padding-top:9px;position:relative}
.pthumb{width:24px;height:26px;background:#d0d0d0;margin-top:5px}
.pdown{position:absolute;bottom:7px;left:6px}

/* status */
.status{height:32px;flex:none;background:#f3f2f1;display:flex;align-items:center;font-size:14.700px;color:#555;position:relative}
.status-text{padding-left:11px}
.numlock{position:absolute;left:1641px;top:6px}
.view-btn{position:absolute;top:0;height:32px;width:60px;display:flex;align-items:center;justify-content:center}
.vb1{left:1738px}
.vb2{left:1799px}
.view-btn.active{left:1859px;background:#d2d2d2}

/* taskbar */
.taskbar{height:60px;flex:none;background:linear-gradient(90deg,#1f3a45 0,#1f3a45 50%,#1b2b46 75%,#1a2a44 100%);display:flex;align-items:center;position:relative;color:#fff}
.tb-start{width:73px;display:flex;justify-content:center}
.tb-search{width:515px;height:60px;background:#f2f2f2;border:2px solid #bdbdbd;border-bottom-width:3px;display:flex;align-items:center;color:#222;font-size:21.500px;padding:4px 0 0 16px;position:relative;gap:17px}
.tb-glass{color:#111;margin-top:-6px}
.tb-fig{position:absolute;left:412px;top:0}
.tb-cortana{width:72px;display:flex;justify-content:center}
.tb-cortana i{width:22px;height:22px;border:3.500px solid #fff;border-radius:50%;display:block}
.tb-app{height:60px;width:73px;display:flex;align-items:center;justify-content:center;flex:none}
.tb-teams{width:80px;position:relative;padding-left:6px}
.tb-teams::after{content:"";position:absolute;left:11px;width:61px;bottom:0;height:3px;background:#6cb0e0}
.tb-access{background:#4d5f68;border-bottom:3px solid #6cb0e0}
.t-t{font:700 13px "Liberation Sans",sans-serif;fill:#fff;text-anchor:middle}
.t-7{font:700 20px "Liberation Sans",sans-serif;fill:#fff;text-anchor:middle}
.t-a{font:700 14px "Liberation Sans",sans-serif;fill:#fff;text-anchor:middle}
.tb-arrows{position:absolute;left:906px;top:0;width:27px;height:60px;background:#f2f2f2;display:flex;align-items:center;justify-content:center}
.tb-addr-l{position:absolute;left:943px;top:18px;font-size:17px;letter-spacing:-.2px;color:#e4e8ec}
.tb-addr{position:absolute;left:1014px;top:8px;width:383px;height:45px;background:#fff;color:#555}
.tb-addr i{position:absolute;left:336px;top:0;bottom:0;width:1px;background:#ddd}
.tb-ch{position:absolute;left:305px;top:18px}
.tb-ref{position:absolute;left:350px;top:10px}
.tb-cloud{position:absolute;left:1417px;top:8px}
.tb-temp{position:absolute;left:1466px;top:16px;font-size:20px;letter-spacing:-.3px}
.tb-ic{position:absolute;top:18px}
.tb-up{left:1537px;top:23px}
.tb-plug{left:1572px}
.tb-wifi{left:1608px}
.tb-vol{left:1642px}
.tb-eng{position:absolute;left:1683px;top:18px;font-size:17px;letter-spacing:-.3px}
.tb-clock{position:absolute;left:1730px;top:3px;width:106px;text-align:center;font-size:17.500px;line-height:28px;display:flex;flex-direction:column;letter-spacing:-.3px}
.tb-note{position:absolute;left:1857px;top:17px}
```
